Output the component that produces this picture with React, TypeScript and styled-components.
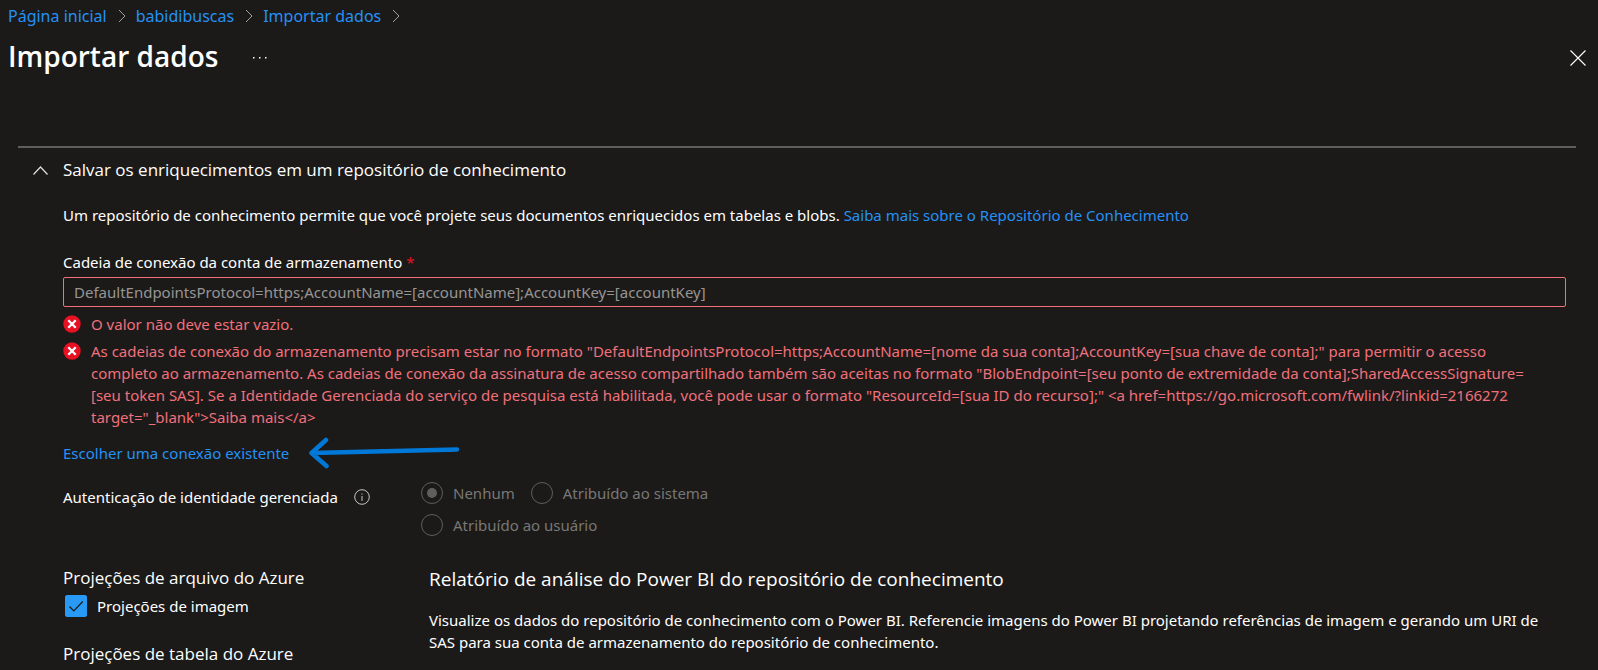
import React from "react";
import styled, { createGlobalStyle } from "styled-components";

const GlobalStyle = createGlobalStyle`
  *, *::before, *::after { box-sizing: border-box; }
  body {
    margin: 0;
    background: #1b1a19;
    color: #ffffff;
    font-family: "Segoe UI", "Noto Sans", sans-serif;
    font-size: 15px;
    line-height: 22px;
  }
  h1, h2, h3, p, ol, ul { margin: 0; padding: 0; font-weight: 400; }
  button, input { font: inherit; color: inherit; }
`;

const headingFont = `"Segoe UI", "Open Sans", sans-serif`;

const Page = styled.div`
  display: flex;
  flex-direction: column;
  min-height: 100vh;
  padding-top: 5px;
`;

const Breadcrumb = styled.ol`
  display: flex;
  align-items: center;
  padding: 0 8px;
  font-size: 16px;
  list-style: none;
`;

const Crumb = styled.li`
  display: flex;
  align-items: center;
  gap: 10px;
  padding-right: 9px;
`;

const Link = styled.a`
  color: #2491f5;
  text-decoration: none;
  &:hover { text-decoration: underline; }
`;

const TitleBar = styled.header`
  display: flex;
  align-items: center;
  gap: 34px;
  height: 44px;
  margin-top: 7px;
  padding: 0 12px 0 8px;
`;

const Title = styled.h1`
  font-family: ${headingFont};
  font-size: 28px;
  line-height: 40px;
  font-weight: 600;
`;

const IconButton = styled.button<{ $end?: boolean }>`
  display: flex;
  align-items: center;
  justify-content: center;
  height: 24px;
  padding: 0;
  border: 0;
  background: none;
  cursor: pointer;
  margin-left: ${(p) => (p.$end ? "auto" : "0")};
`;

const Section = styled.section`
  margin: 68px 22px 0 18px;
  padding: 10px 10px 0 12px;
  border-top: 2px solid #605e5c;
`;

const SectionToggle = styled.button`
  display: flex;
  align-items: center;
  gap: 13px;
  padding: 0;
  border: 0;
  background: none;
  font-family: ${headingFont};
  font-size: 17px;
  line-height: 24px;
  cursor: pointer;
`;

const SectionBody = styled.div`
  padding: 22px 0 0 33px;
`;

const Field = styled.div`
  display: flex;
  flex-direction: column;
  gap: 4px;
  margin-top: 25px;
`;

const Required = styled.span`
  color: #e81123;
`;

const TextInput = styled.input`
  width: 100%;
  height: 30px;
  padding: 0 10px;
  border: 1px solid #f1707b;
  border-radius: 2px;
  background: transparent;
  &::placeholder { color: #979593; opacity: 1; }
`;

const ErrorList = styled.ul`
  display: flex;
  flex-direction: column;
  gap: 5px;
  margin-top: 6px;
  list-style: none;
`;

const ErrorItem = styled.li`
  display: grid;
  grid-template-columns: 18px 1fr;
  column-gap: 10px;
  color: #f1707b;
  & > svg { margin-top: 2px; }
`;

const ErrorLine = styled.span`
  display: block;
`;

const ConnectionRow = styled.div`
  display: flex;
  align-items: center;
  gap: 19px;
  height: 32px;
  margin-top: 9px;
`;

const AuthRow = styled.div`
  display: grid;
  grid-template-columns: 358px 1fr;
  margin-top: 13px;
`;

const AuthLabel = styled.div`
  display: flex;
  align-items: center;
  gap: 16px;
  height: 30px;
`;

const RadioGroup = styled.div`
  display: flex;
  flex-wrap: wrap;
  gap: 10px 16px;
  max-width: 310px;
`;

const Choice = styled.label<{ $disabled?: boolean }>`
  display: flex;
  align-items: center;
  gap: 10px;
  color: ${(p) => (p.$disabled ? "#797775" : "#ffffff")};
`;

const Radio = styled.input`
  appearance: none;
  display: grid;
  place-items: center;
  width: 22px;
  height: 22px;
  margin: 0;
  border: 1px solid #605e5c;
  border-radius: 50%;
  &:checked::before {
    content: "";
    width: 10px;
    height: 10px;
    border-radius: 50%;
    background: #605e5c;
  }
`;

const CheckFrame = styled.span`
  display: grid;
  width: 22px;
  height: 22px;
  margin-left: 2px;
  & > * { grid-area: 1 / 1; }
  & > svg { pointer-events: none; visibility: hidden; }
  & > input:checked + svg { visibility: visible; }
`;

const Checkbox = styled.input`
  appearance: none;
  width: 22px;
  height: 22px;
  margin: 0;
  border: 1px solid #c8c6c4;
  border-radius: 2px;
  &:checked { border-color: #2899f5; background: #2899f5; }
`;

const Projections = styled.div`
  display: grid;
  grid-template-columns: 366px 1fr;
  margin-top: 30px;
`;

const Options = styled.div`
  display: flex;
  flex-direction: column;
  gap: 25px;
`;

const OptionGroup = styled.div`
  display: flex;
  flex-direction: column;
  gap: 5px;
`;

const GroupTitle = styled.h3`
  font-family: ${headingFont};
  font-size: 17px;
  line-height: 24px;
`;

const Report = styled.div`
  display: flex;
  flex-direction: column;
  gap: 18px;
  padding: 1px 12px 0 0;
`;

const ReportTitle = styled.h2`
  font-family: ${headingFont};
  font-size: 19px;
  line-height: 24px;
`;

const CrumbChevron = () => (
  <svg width="10" height="14" viewBox="0 0 10 14" fill="none" stroke="#a19f9d" aria-hidden="true">
    <path d="M2 1l6 6-6 6" />
  </svg>
);

const ErrorIcon = () => (
  <svg width="18" height="18" viewBox="0 0 18 18" aria-hidden="true">
    <circle cx="9" cy="9" r="8.7" fill="#e81123" />
    <path d="M5.3 5.3l7.4 7.4M12.7 5.3l-7.4 7.4" stroke="#fff" strokeWidth="2.3" />
  </svg>
);

const crumbs = ["Página inicial", "babidibuscas", "Importar dados"];

const connectionErrors = [
  ["O valor não deve estar vazio."],
  [
    'As cadeias de conexão do armazenamento precisam estar no formato "DefaultEndpointsProtocol=https;AccountName=[nome da sua conta];AccountKey=[sua chave de conta];" para permitir o acesso',
    'completo ao armazenamento. As cadeias de conexão da assinatura de acesso compartilhado também são aceitas no formato "BlobEndpoint=[seu ponto de extremidade da conta];SharedAccessSignature=',
    '[seu token SAS]. Se a Identidade Gerenciada do serviço de pesquisa está habilitada, você pode usar o formato "ResourceId=[sua ID do recurso];" <a href=https://go.microsoft.com/fwlink/?linkid=2166272',
    'target="_blank">Saiba mais</a>',
  ],
];

export default function App() {
  return (
    <>
      <GlobalStyle />
      <Page>
        <nav>
          <Breadcrumb>
            {crumbs.map((name) => (
              <Crumb key={name}>
                <Link href="#">{name}</Link>
                <CrumbChevron />
              </Crumb>
            ))}
          </Breadcrumb>
        </nav>
        <TitleBar>
          <Title>Importar dados</Title>
          <IconButton aria-label="Mais opções">
            <svg width="15" height="8" viewBox="0 0 15 8" fill="#fff">
              <rect x="1" y="5" width="1.5" height="1.5" />
              <rect x="7" y="5" width="1.5" height="1.5" />
              <rect x="13" y="5" width="1.5" height="1.5" />
            </svg>
          </IconButton>
          <IconButton $end aria-label="Fechar">
            <svg width="16" height="20" viewBox="0 0 16 20" stroke="#fff" strokeWidth="1.1">
              <path d="M.5 4.5l15 15M15.5 4.5l-15 15" />
            </svg>
          </IconButton>
        </TitleBar>

        <Section>
          <SectionToggle aria-expanded="true">
            <svg width="20" height="14" viewBox="0 0 20 14" fill="none" stroke="#e1dfdd" strokeWidth="1.2">
              <path d="M3.5 11.5l7-7.5 7 7.5" />
            </svg>
            Salvar os enriquecimentos em um repositório de conhecimento
          </SectionToggle>
          <SectionBody>
            <p>
              Um repositório de conhecimento permite que você projete seus documentos enriquecidos em tabelas e blobs.{" "}
              <Link href="#">Saiba mais sobre o Repositório de Conhecimento</Link>
            </p>

            <Field>
              <label htmlFor="connection">
                Cadeia de conexão da conta de armazenamento <Required>*</Required>
              </label>
              <TextInput
                id="connection"
                type="text"
                aria-invalid="true"
                placeholder="DefaultEndpointsProtocol=https;AccountName=[accountName];AccountKey=[accountKey]"
              />
            </Field>

            <ErrorList>
              {connectionErrors.map((lines) => (
                <ErrorItem key={lines[0]}>
                  <ErrorIcon />
                  <p>
                    {lines.map((line) => (
                      <ErrorLine key={line}>{line}</ErrorLine>
                    ))}
                  </p>
                </ErrorItem>
              ))}
            </ErrorList>

            <ConnectionRow>
              <Link href="#">Escolher uma conexão existente</Link>
              <svg
                width="152"
                height="32"
                viewBox="0 0 152 32"
                fill="none"
                stroke="#0078d7"
                strokeWidth="4.5"
                strokeLinecap="round"
                strokeLinejoin="round"
                aria-hidden="true"
              >
                <path d="M3.5 16L149 12.5M18 3L3.5 16 18.5 29" />
              </svg>
            </ConnectionRow>

            <AuthRow>
              <AuthLabel>
                <span id="auth-label">Autenticação de identidade gerenciada</span>
                <svg width="16" height="16" viewBox="0 0 16 16" fill="none" stroke="#c8c6c4" aria-hidden="true">
                  <circle cx="8" cy="8" r="7.3" />
                  <path d="M8 7v5M8 4.5v1.2" />
                </svg>
              </AuthLabel>
              <RadioGroup role="radiogroup" aria-labelledby="auth-label">
                <Choice $disabled>
                  <Radio type="radio" name="auth" defaultChecked disabled />
                  Nenhum
                </Choice>
                <Choice $disabled>
                  <Radio type="radio" name="auth" disabled />
                  Atribuído ao sistema
                </Choice>
                <Choice $disabled>
                  <Radio type="radio" name="auth" disabled />
                  Atribuído ao usuário
                </Choice>
              </RadioGroup>
            </AuthRow>

            <Projections>
              <Options>
                <OptionGroup>
                  <GroupTitle>Projeções de arquivo do Azure</GroupTitle>
                  <Choice>
                    <CheckFrame>
                      <Checkbox type="checkbox" defaultChecked />
                      <svg width="22" height="22" viewBox="0 0 22 22" fill="none" stroke="#1b1a19" strokeWidth="1.2">
                        <path d="M4.5 11.5l4.300 4.300 9-9.300" />
                      </svg>
                    </CheckFrame>
                    Projeções de imagem
                  </Choice>
                </OptionGroup>
                <GroupTitle>Projeções de tabela do Azure</GroupTitle>
              </Options>
              <Report>
                <ReportTitle>Relatório de análise do Power BI do repositório de conhecimento</ReportTitle>
                <p>
                  Visualize os dados do repositório de conhecimento com o Power BI. Referencie imagens do Power BI
                  projetando referências de imagem e gerando um URI de SAS para sua conta de armazenamento do
                  repositório de conhecimento.
                </p>
              </Report>
            </Projections>
          </SectionBody>
        </Section>
      </Page>
    </>
  );
}
